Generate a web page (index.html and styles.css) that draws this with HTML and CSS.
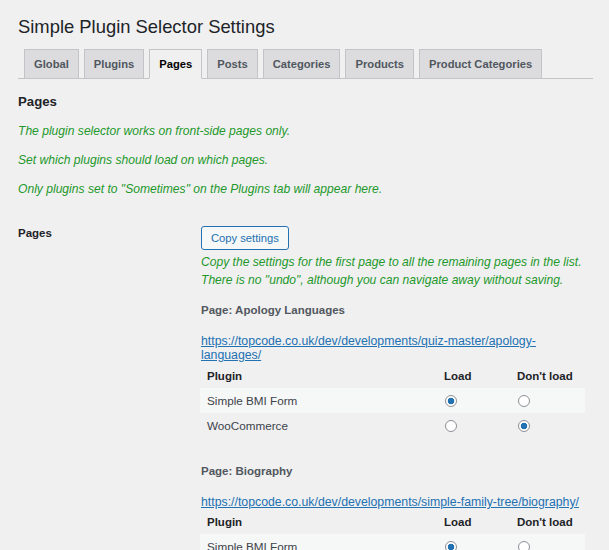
FILE: index.html
```html
<!DOCTYPE html>
<html lang="en">
<head>
<meta charset="utf-8">
<title>Simple Plugin Selector Settings</title>
<link rel="stylesheet" href="styles.css">
</head>
<body>
<div class="wrap">
  <h1 class="title">Simple Plugin Selector Settings</h1>
  <nav class="tabs">
    <a class="tab" href="#">Global</a>
    <a class="tab" href="#">Plugins</a>
    <a class="tab tab-active" href="#">Pages</a>
    <a class="tab" href="#">Posts</a>
    <a class="tab" href="#">Categories</a>
    <a class="tab" href="#">Products</a>
    <a class="tab" href="#">Product Categories</a>
  </nav>
  <h2 class="section">Pages</h2>
  <p class="note">The plugin selector works on front-side pages only.</p>
  <p class="note">Set which plugins should load on which pages.</p>
  <p class="note">Only plugins set to "Sometimes" on the Plugins tab will appear here.</p>

  <div class="form-row">
    <div class="label">Pages</div>
    <div class="field">
      <button class="btn" type="button">Copy settings</button>
      <p class="desc">Copy the settings for the first page to all the remaining pages in the list.<br>There is no "undo", although you can navigate away without saving.</p>

      <div class="page-block">
        <h3 class="page-title">Page: Apology Languages</h3>
        <a class="page-link" href="#">https://topcode.co.uk/dev/developments/quiz-master/apology-<br>languages/</a>
        <table class="plugins">
          <thead>
            <tr><th class="c-name">Plugin</th><th class="c-load">Load</th><th class="c-noload">Don't load</th></tr>
          </thead>
          <tbody>
            <tr class="alt"><td>Simple BMI Form</td><td><input class="radio" type="radio" name="a1" checked></td><td><input class="radio" type="radio" name="a1"></td></tr>
            <tr><td>WooCommerce</td><td><input class="radio" type="radio" name="a2"></td><td><input class="radio" type="radio" name="a2" checked></td></tr>
          </tbody>
        </table>
      </div>

      <div class="page-block page-block-next">
        <h3 class="page-title">Page: Biography</h3>
        <a class="page-link page-link-tight" href="#">https://topcode.co.uk/dev/developments/simple-family-tree/biography/</a>
        <table class="plugins">
          <thead>
            <tr><th class="c-name">Plugin</th><th class="c-load">Load</th><th class="c-noload">Don't load</th></tr>
          </thead>
          <tbody>
            <tr class="alt"><td>Simple BMI Form</td><td><input class="radio" type="radio" name="b1" checked></td><td><input class="radio" type="radio" name="b1"></td></tr>
            <tr><td>WooCommerce</td><td><input class="radio" type="radio" name="b2"></td><td><input class="radio" type="radio" name="b2" checked></td></tr>
          </tbody>
        </table>
      </div>
    </div>
  </div>
</div>
</body>
</html>
```
FILE: styles.css
```css
html, body {
  margin: 0;
  padding: 0;
  overflow: hidden;
  background: #f0f0f1;
}
body {
  font-family: "Liberation Sans", Arial, sans-serif;
  color: #3c434a;
}
.wrap {
  padding: 15px 16px 0 18px;
}
.title {
  margin: 0 0 10px;
  font-size: 18.4px;
  font-weight: 400;
  line-height: 24px;
  color: #1d2327;
}
.tabs {
  display: flex;
  gap: 5px;
  padding-left: 6px;
  border-bottom: 1px solid #c3c4c7;
}
.tab {
  display: block;
  padding: 5px 9px 4px;
  line-height: 19px;
  font-size: 11.2px;
  font-weight: 700;
  color: #50575e;
  text-decoration: none;
  background: #dcdcde;
  border: 1px solid #c3c4c7;
  margin-bottom: -1px;
}
.tab-active {
  background: #f0f0f1;
  color: #000;
  border-bottom-color: #f0f0f1;
}
.section {
  margin: 14px 0 12px;
  font-size: 13.2px;
  line-height: 17px;
  font-weight: 700;
  color: #1d2327;
}
.note {
  margin: 0 0 11px;
  font-size: 12.1px;
  line-height: 18px;
  font-style: italic;
  color: #23982a;
}
.form-row {
  display: grid;
  grid-template-columns: 183px 386px;
  margin-top: 28px;
}
.label {
  margin-top: -1px;
  font-size: 11.5px;
  line-height: 16px;
  font-weight: 700;
  color: #1d2327;
}
.btn {
  display: block;
  height: 24px;
  padding: 0 9px;
  margin: 0;
  font-family: inherit;
  font-size: 11.2px;
  line-height: 22px;
  color: #2271b1;
  background: #f6f7f7;
  border: 1px solid #2271b1;
  border-radius: 3px;
}
.desc {
  margin: 3px 0 0;
  font-size: 12.1px;
  line-height: 18px;
  font-style: italic;
  color: #23982a;
}
.page-title {
  margin: 12px 0 0;
  font-size: 11.5px;
  line-height: 18px;
  font-weight: 700;
  color: #50575e;
}
.page-block-next {
  margin-top: 24px;
}
.page-link {
  display: block;
  margin-top: 15px;
  font-size: 12.3px;
  line-height: 14px;
  color: #2271b1;
  text-decoration: underline;
}
.plugins {
  width: 385px;
  margin-top: 2px;
  margin-left: -1px;
  border-collapse: collapse;
  font-size: 11.7px;
}
.page-link-tight + .plugins {
  margin-top: 1px;
}
.plugins th {
  height: 24px;
  padding: 0 0 0 7px;
  text-align: left;
  font-weight: 700;
  font-size: 11.5px;
  color: #1d2327;
}
.c-name { width: 230px; }
.c-load { width: 66px; }
.plugins td {
  height: 25px;
  padding: 0 0 0 7px;
  vertical-align: middle;
  color: #3c434a;
}
.plugins tr.alt td {
  background: #f6f7f7;
}
.radio {
  -webkit-appearance: none;
  appearance: none;
  display: block;
  width: 12px;
  height: 12px;
  margin: 0 0 0 1px;
  border: 1px solid #8c8f94;
  border-radius: 50%;
  background: #fff;
  box-sizing: border-box;
}
.radio:checked {
  background: radial-gradient(circle, #2271b1 0, #2271b1 3px, #fff 3.6px);
}
```
